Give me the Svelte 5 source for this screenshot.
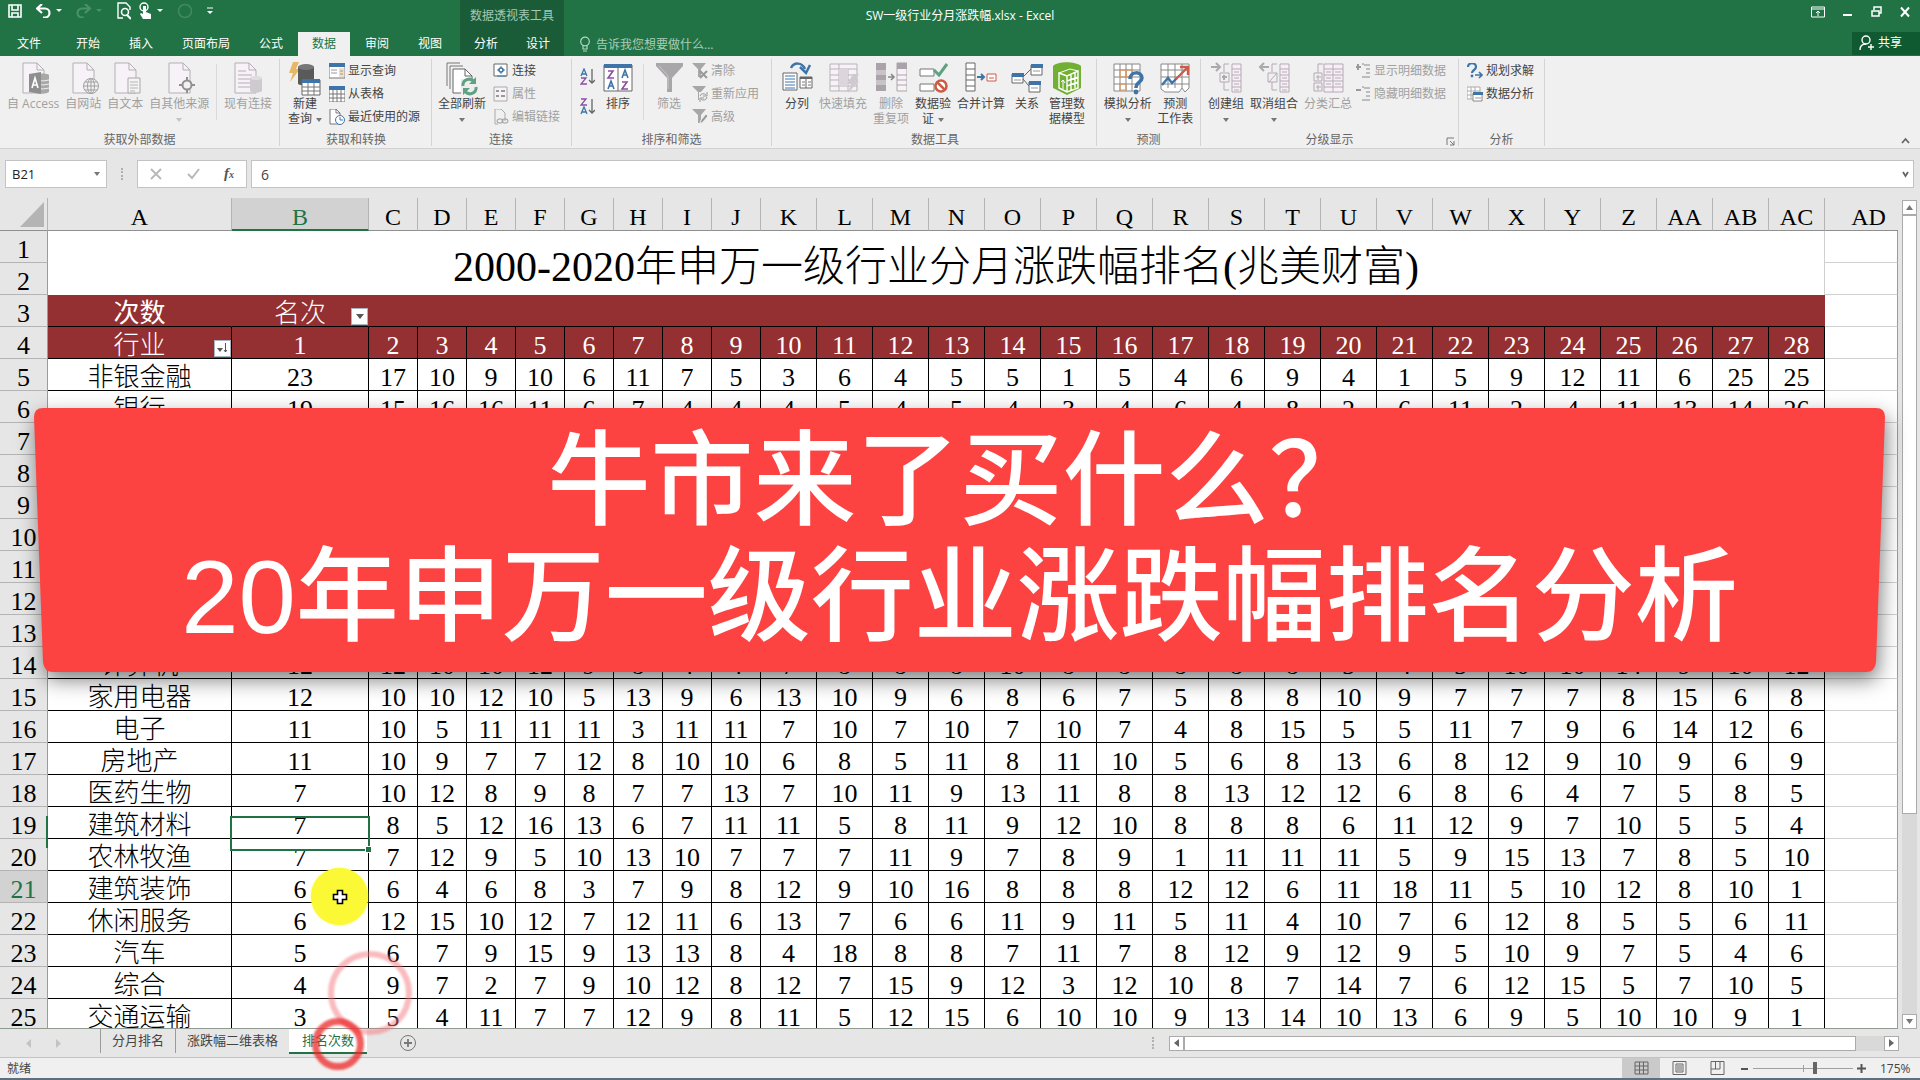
<script lang="ts">
  type Big = { kind: 'big'; icon: string; lines: string[]; off?: boolean; arrow?: boolean }
  type Small = { icon: string; text: string; off?: boolean }
  type Stack = { kind: 'stack'; items: Small[] }
  type Rule = { kind: 'rule' }
  type SortPair = { kind: 'pair' }
  type Group = { id: string; title: string; launcher?: boolean; items: (Big | Stack | Rule | SortPair)[] }

  const tabs = ['开始', '插入', '页面布局', '公式', '数据', '审阅', '视图']

  const groups: Group[] = [
    {
      id: 'external',
      title: '获取外部数据',
      items: [
        { kind: 'big', icon: 'access', lines: ['自 Access'], off: true },
        { kind: 'big', icon: 'web', lines: ['自网站'], off: true },
        { kind: 'big', icon: 'text', lines: ['自文本'], off: true },
        { kind: 'big', icon: 'other', lines: ['自其他来源'], off: true, arrow: true },
        { kind: 'rule' },
        { kind: 'big', icon: 'existing', lines: ['现有连接'], off: true },
      ],
    },
    {
      id: 'transform',
      title: '获取和转换',
      items: [
        { kind: 'big', icon: 'query', lines: ['新建', '查询'], arrow: true },
        {
          kind: 'stack',
          items: [
            { icon: 'showquery', text: '显示查询' },
            { icon: 'fromtable', text: '从表格' },
            { icon: 'recent', text: '最近使用的源' },
          ],
        },
      ],
    },
    {
      id: 'connect',
      title: '连接',
      items: [
        { kind: 'big', icon: 'refresh', lines: ['全部刷新'], arrow: true },
        {
          kind: 'stack',
          items: [
            { icon: 'link', text: '连接' },
            { icon: 'props', text: '属性', off: true },
            { icon: 'editlink', text: '编辑链接', off: true },
          ],
        },
      ],
    },
    {
      id: 'sort',
      title: '排序和筛选',
      items: [
        { kind: 'pair' },
        { kind: 'big', icon: 'sort', lines: ['排序'] },
        { kind: 'rule' },
        { kind: 'big', icon: 'filter', lines: ['筛选'], off: true },
        {
          kind: 'stack',
          items: [
            { icon: 'clear', text: '清除', off: true },
            { icon: 'reapply', text: '重新应用', off: true },
            { icon: 'advanced', text: '高级', off: true },
          ],
        },
      ],
    },
    {
      id: 'tools',
      title: '数据工具',
      items: [
        { kind: 'big', icon: 'columns', lines: ['分列'] },
        { kind: 'big', icon: 'flash', lines: ['快速填充'], off: true },
        { kind: 'big', icon: 'dedupe', lines: ['删除', '重复项'], off: true },
        { kind: 'big', icon: 'validate', lines: ['数据验', '证'], arrow: true },
        { kind: 'big', icon: 'consolidate', lines: ['合并计算'] },
        { kind: 'big', icon: 'relation', lines: ['关系'] },
        { kind: 'big', icon: 'model', lines: ['管理数', '据模型'] },
      ],
    },
    {
      id: 'forecast',
      title: '预测',
      items: [
        { kind: 'big', icon: 'whatif', lines: ['模拟分析'], arrow: true },
        { kind: 'big', icon: 'forecast', lines: ['预测', '工作表'] },
      ],
    },
    {
      id: 'outline',
      title: '分级显示',
      launcher: true,
      items: [
        { kind: 'big', icon: 'group', lines: ['创建组'], arrow: true },
        { kind: 'big', icon: 'ungroup', lines: ['取消组合'], arrow: true },
        { kind: 'big', icon: 'subtotal', lines: ['分类汇总'], off: true },
        {
          kind: 'stack',
          items: [
            { icon: 'expand', text: '显示明细数据', off: true },
            { icon: 'collapse', text: '隐藏明细数据', off: true },
          ],
        },
      ],
    },
    {
      id: 'analysis',
      title: '分析',
      items: [
        {
          kind: 'stack',
          items: [
            { icon: 'solver', text: '规划求解' },
            { icon: 'analysis', text: '数据分析' },
          ],
        },
      ],
    },
  ]

  const columns = 'A B C D E F G H I J K L M N O P Q R S T U V W X Y Z AA AB AC AD'.split(' ')
  const ranks = Array.from({ length: 28 }, (_, i) => i + 1)

  const rows = [
    { n: 5, name: '非银金融', v: '23 17 10 9 10 6 11 7 5 3 6 4 5 5 1 5 4 6 9 4 1 5 9 12 11 6 25 25' },
    { n: 6, name: '银行', v: '19 15 16 16 11 6 7 4 4 4 5 4 5 4 3 4 6 4 8 2 6 11 2 4 11 13 14 26' },
    { n: 7, name: '', v: '' },
    { n: 8, name: '', v: '' },
    { n: 9, name: '', v: '' },
    { n: 10, name: '', v: '' },
    { n: 11, name: '', v: '' },
    { n: 12, name: '', v: '' },
    { n: 13, name: '', v: '' },
    { n: 14, name: '计算机', v: '12 12 10 10 12 9 8 4 4 7 8 8 8 10 8 8 8 8 8 5 4 5 10 10 14 9 10 12' },
    { n: 15, name: '家用电器', v: '12 10 10 12 10 5 13 9 6 13 10 9 6 8 6 7 5 8 8 10 9 7 7 7 8 15 6 8' },
    { n: 16, name: '电子', v: '11 10 5 11 11 11 3 11 11 7 10 7 10 7 10 7 4 8 15 5 5 11 7 9 6 14 12 6' },
    { n: 17, name: '房地产', v: '11 10 9 7 7 12 8 10 10 6 8 5 11 8 11 10 5 6 8 13 6 8 12 9 10 9 6 9' },
    { n: 18, name: '医药生物', v: '7 10 12 8 9 8 7 7 13 7 10 11 9 13 11 8 8 13 12 12 6 8 6 4 7 5 8 5' },
    { n: 19, name: '建筑材料', v: '7 8 5 12 16 13 6 7 11 11 5 8 11 9 12 10 8 8 8 6 11 12 9 7 10 5 5 4' },
    { n: 20, name: '农林牧渔', v: '7 7 12 9 5 10 13 10 7 7 7 11 9 7 8 9 1 11 11 11 5 9 15 13 7 8 5 10' },
    { n: 21, name: '建筑装饰', v: '6 6 4 6 8 3 7 9 8 12 9 10 16 8 8 8 12 12 6 11 18 11 5 10 12 8 10 1' },
    { n: 22, name: '休闲服务', v: '6 12 15 10 12 7 12 11 6 13 7 6 6 11 9 11 5 11 4 10 7 6 12 8 5 5 6 11' },
    { n: 23, name: '汽车', v: '5 6 7 9 15 9 13 13 8 4 18 8 8 7 11 7 8 12 9 12 9 5 10 9 7 5 4 6' },
    { n: 24, name: '综合', v: '4 9 7 2 7 9 10 12 8 12 7 15 9 12 3 12 10 8 7 14 7 6 12 15 5 7 10 5' },
    { n: 25, name: '交通运输', v: '3 5 4 11 7 7 12 9 8 11 5 12 15 6 10 10 9 13 14 10 13 6 9 5 10 10 9 1' },
  ].map((r) => ({ n: r.n, name: r.name, cells: r.v ? r.v.split(' ') : ranks.map(() => '') }))

  const sheets = ['分月排名', '涨跌幅二维表格', '排名次数']

  let cellRef = $state('B21')
  let formula = $state('6')
  let zoom = $state(62)
</script>

{#snippet page()}
  <path d="M6 1h14l7 7v23H6z" fill="#f7f2f7" stroke="#b5afb5" /><path d="M20 1v7h7" fill="none" stroke="#b5afb5" />
{/snippet}

{#snippet glyph(name: string)}
  {#if name === 'access'}
    {@render page()}
    <path d="M18 13c3-2 12-2 14 0v17c-3 2-11 2-14 0z" fill="#a8a8a8" />
    <path d="M20 18q6 2 12 0M20 22q6 2 12 0M20 26q6 2 12 0" stroke="#eee" fill="none" />
    <path d="M12 12l12-2v22l-12-2z" fill="#8e8e8e" />
    <path d="M15 26l3-10 3 10M16 23h4" stroke="#fff" stroke-width="1.6" fill="none" />
  {:else if name === 'web'}
    {@render page()}
    <circle cx="24" cy="24" r="7.5" fill="#f2f2f2" stroke="#a0a0a0" />
    <ellipse cx="24" cy="24" rx="3.5" ry="7.5" fill="none" stroke="#a0a0a0" />
    <path d="M17 24h14M18 20h12M18 28h12M24 16v16" stroke="#a0a0a0" fill="none" />
  {:else if name === 'text'}
    {@render page()}
    <path d="M19 16h12v15H19z" fill="#f4f4f4" stroke="#a8a8a8" />
    <path d="M21 20h8M21 23h8M21 26h8M21 29h5" stroke="#b4b4b4" />
  {:else if name === 'other'}
    {@render page()}
    <circle cx="24" cy="23" r="4.5" fill="#f2f2f2" stroke="#909090" stroke-width="2" />
    <path d="M24 15v4M24 27v4M16 23h4M28 23h4" stroke="#909090" stroke-width="2" />
  {:else if name === 'existing'}
    <path d="M3 1h14l7 7v23H3z" fill="#f7f2f7" stroke="#b5afb5" /><path d="M17 1v7h7" fill="none" stroke="#b5afb5" />
    <path d="M6 9h8M6 13h14M6 17h14M6 21h12M6 25h12" stroke="#b5afb5" />
    <path d="M18 16c2-2 10-2 12 0v13c-2 2-10 2-12 0z" fill="#cfcacf" />
    <ellipse cx="24" cy="16" rx="6" ry="2" fill="#e0dce0" />
  {:else if name === 'query'}
    <path d="M4 0h6L7 7h4L1 20l3-9H0z" fill="#e8b766" />
    <path d="M9 5c3-3 13-3 16 0v17c-4 2-12 2-16 0z" fill="#5a5a5a" />
    <ellipse cx="17" cy="5" rx="8" ry="3" fill="#777" />
    <path d="M13 18h18v15H13z" fill="#fff" stroke="#666" />
    <path d="M13 17h18v4H13z" fill="#3e74a8" />
    <path d="M13 25h18M13 29h18M19 21v12M25 21v12" stroke="#777" />
  {:else if name === 'refresh'}
    <path d="M1 24V1h13M4 27V4h13" fill="none" stroke="#777" />
    <path d="M7 7h12l7 7v17H7z" fill="#fff" stroke="#666" /><path d="M19 7v7h7" fill="none" stroke="#666" />
    <rect x="15" y="17" width="16" height="15" fill="#eee" />
    <path d="M17 24a6 6 0 0 1 11-4M30 25a6 6 0 0 1-11 4" stroke="#5fa183" stroke-width="3" fill="none" />
    <path d="M30 15v7h-7zM17 33v-7h7z" fill="#5fa183" />
  {:else if name === 'sort'}
    <path d="M2 3h28v26H2zM16 3v26" fill="#fff" stroke="#666" />
    <path d="M2 2h28v4H2z" fill="#3e74a8" />
    <path d="M6 9h5l-5 7h6M20 20h5l-5 7h6" stroke="#8a4fa3" stroke-width="1.6" fill="none" />
    <path d="M20 16l3-8 3 8M21 13h4M6 27l3-8 3 8M7 24h4" stroke="#3e74a8" stroke-width="1.6" fill="none" />
  {:else if name === 'filter'}
    <path d="M3 1h27v3L19 16v14h-5V16L3 4z" fill="#a9a6a9" />
    <path d="M6 4l9 10v13" stroke="#c9c6c9" fill="none" />
  {:else if name === 'columns'}
    <path d="M10 6c3-6 11-6 14 1" stroke="#3e74a8" stroke-width="2.5" fill="none" /><path d="M19 5l6 6 4-8" fill="none" stroke="#3e74a8" stroke-width="2.5" />
    <path d="M2 11h14v17H2z" fill="#fff" stroke="#666" />
    <path d="M4 14h10M4 17h10M4 20h10M4 23h10M4 26h10" stroke="#3e74a8" />
    <path d="M19 15h12v11H19zM25 15v11" fill="#fff" stroke="#666" /><path d="M19 16h12" stroke="#666" stroke-width="2" />
    <path d="M21 20h3M21 23h3M27 20h3M27 23h3" stroke="#777" />
  {:else if name === 'flash'}
    <path d="M3 2h27v27H3zM3 7h27M3 13h27M3 18h27M3 24h27M12 2v27M21 7v22" fill="#f6f2f6" stroke="#b9b3b9" />
    <path d="M12 7h9v17h-9z" fill="#dcd6dc" /><path d="M26 12h6l-4 7h4L21 31l3-9h-4z" fill="#cfcacf" />
  {:else if name === 'dedupe'}
    <path d="M1 1h10v28H1z" fill="#aaa4aa" /><path d="M1 8h10v5H1zM1 18h10v5H1z" fill="#c8c3c8" />
    <path d="M22 1h10v28H22z" fill="#f6f2f6" stroke="#aaa4aa" /><path d="M22 1h10v6H22z" fill="#aaa4aa" />
    <path d="M22 13h10M22 18h10M22 23h10" stroke="#aaa4aa" />
    <path d="M13 15h6M16 12l3 3-3 3" stroke="#888" stroke-width="1.6" fill="none" />
  {:else if name === 'validate'}
    <path d="M3 7h14v7H3zM3 22h14v7H3z" fill="#fff" stroke="#777" />
    <path d="M17 8l5 5 8-11" fill="none" stroke="#5fa183" stroke-width="3" />
    <circle cx="24" cy="24" r="5.5" fill="#fff" stroke="#cd5b45" stroke-width="2.5" /><path d="M20 20l8 8" stroke="#cd5b45" stroke-width="2.5" />
  {:else if name === 'consolidate'}
    <path d="M1 1h9v28H1zM1 7h9M1 13h9M1 18h9M1 24h9" fill="#fff" stroke="#666" />
    <path d="M12 15h7M16 12l3 3-3 3" stroke="#3e74a8" stroke-width="2" fill="none" />
    <path d="M22 12h9v7h-9zM24 16h5" fill="#fff" stroke="#cd5b45" />
  {:else if name === 'relation'}
    <path d="M12 15l8-8M12 17l6 7" stroke="#666" />
    <path d="M1 12h11v9H1zM20 3h11v10H20zM18 20h11v10H18z" fill="#fff" stroke="#666" />
    <path d="M1 11h12v4H1zM20 2h12v4H20zM18 19h12v4H18z" fill="#3e74a8" />
    <path d="M3 18h7M22 9h7M20 26h7" stroke="#999" />
  {:else if name === 'model'}
    <path d="M2 4c5-5 22-5 28 0v22l-14 7L2 26z" fill="#72b033" />
    <path d="M8 11l8 3 11-5v17l-11 4-8-4zM16 14v16M20 12v16M24 11v15M16 19l11-4M16 24l11-4" stroke="#fff" fill="none" stroke-width="1.4" />
    <path d="M8 11l11-4 8 2" stroke="#fff" fill="none" /><path d="M12 27v-9l-2 2M12 18l2 3" stroke="#fff" fill="none" />
  {:else if name === 'whatif'}
    <path d="M2 2h26v27H2zM8 2v27M14 2v27M20 2v27M2 8h26M2 15h26M2 22h26" fill="#fff" stroke="#888" />
    <path d="M8 8h6v7H8zM8 22h6v6H8zM14 8h6v7h-6z" fill="none" stroke="#e09250" />
    <path d="M18 17c0-8 12-8 12-1 0 4-6 4-6 10" stroke="#3e74a8" stroke-width="3.5" fill="none" /><circle cx="24" cy="30" r="2.4" fill="#3e74a8" />
  {:else if name === 'forecast'}
    <path d="M2 2h28v24l-4 4-3-4-3 4H6l-4-3zM9 2v24M16 2v24M23 2v24M2 8h28M2 15h28M2 22h28" fill="#fff" stroke="#888" />
    <path d="M3 23l6-7 4 5 5-5" stroke="#3e74a8" stroke-width="2.4" fill="none" /><path d="M17 17l11-11M21 5h8v8" stroke="#cd5b45" stroke-width="2.4" fill="none" />
  {:else if name === 'group' || name === 'ungroup'}
    <path d="M22 2h9v28h-9zM22 7h9M22 13h9M22 19h9M22 25h9" fill="#f6f0f6" stroke="#b5a9b5" />
    <path d="M24 10h5M24 16h5M24 22h5M24 28h5" stroke="#b5a9b5" />
    <path d="M19 2h-5v8M14 20v8h5M10 11h9v9h-9z" fill="none" stroke="#b5a9b5" />
    {#if name === 'group'}
      <path d="M1 5h8M6 1l4 4-4 4M14 13v5M12 15h5" stroke="#aaa" stroke-width="2" fill="none" />
    {:else}
      <path d="M3 5h8M6 1L2 5l4 4" stroke="#aaa" stroke-width="2" fill="none" /><path d="M11 20l8-9" stroke="#b5a9b5" />
    {/if}
  {:else if name === 'subtotal'}
    <path d="M12 2h19v28H12zM12 7h19M12 13h19M12 19h19M12 25h19M21 2v28" fill="#f6f0f6" stroke="#b5a9b5" />
    <path d="M2 11h8v8H2zM2 21h8v8H2zM6 13v5M4 15h5M6 23v5M4 25h5M6 11V2h5" fill="none" stroke="#b5a9b5" />
    <path d="M14 10h5M14 16h5M14 22h5M23 10h6M23 16h6M23 22h6" stroke="#b5a9b5" />
  {:else if name === 'showquery'}
    <path d="M0 1h16v14H0z" fill="#fff" stroke="#777" /><path d="M0 0h16v4H0z" fill="#3e74a8" />
    <path d="M10 5h5v9h-5z" fill="#f2dfc4" /><path d="M2 7h6M2 10h6M11 8h3M11 11h3" stroke="#999" />
  {:else if name === 'fromtable'}
    <path d="M0 1h16v15H0zM4 4v12M8 4v12M12 4v12M0 8h16M0 12h16" fill="#fff" stroke="#777" /><path d="M0 0h16v4H0z" fill="#3e74a8" />
  {:else if name === 'recent'}
    <path d="M1 0h6l4 4v11H1z" fill="#fff" stroke="#777" /><path d="M7 0v4h4" fill="none" stroke="#777" />
    <circle cx="11" cy="11" r="4.5" fill="#fff" stroke="#3e74a8" /><path d="M11 8v3h3" stroke="#3e74a8" fill="none" />
  {:else if name === 'link'}
    <path d="M1 1h13v12H1z" fill="#fff" stroke="#666" /><circle cx="8" cy="7" r="2" fill="none" stroke="#3e74a8" stroke-width="1.6" />
    <path d="M8 3v2M8 9v2M4 7h2M10 7h2M4 13h9" stroke="#3e74a8" />
  {:else if name === 'props'}
    <path d="M1 1h13v14H1z" fill="#f6f2f6" stroke="#aaa" /><path d="M3 5h3M3 10h3M8 5h4M8 10h4" stroke="#999" stroke-width="2" />
  {:else if name === 'editlink'}
    <path d="M2 0h6l4 4v8M2 0v15h3" fill="none" stroke="#aaa" />
    <rect x="4" y="10" width="6" height="4" rx="2" fill="none" stroke="#999" /><rect x="9" y="10" width="6" height="4" rx="2" fill="none" stroke="#999" />
  {:else if name === 'clear' || name === 'reapply' || name === 'advanced'}
    <path d="M0 0h14L9 6v8H6V6z" fill="#a9a6a9" />
    {#if name === 'clear'}
      <path d="M8 8l7 7M15 8l-7 7" stroke="#999" stroke-width="2" />
    {:else if name === 'reapply'}
      <rect x="7" y="6" width="9" height="10" fill="#eee" /><path d="M8 10a3.5 3.5 0 0 1 6-1M15 11a3.5 3.5 0 0 1-6 2M15 6v4h-4M8 16v-4h4" stroke="#999" fill="none" />
    {:else}
      <path d="M8 15l1-4 5-6 2 2-5 6z" fill="#999" stroke="#eee" />
    {/if}
  {:else if name === 'expand' || name === 'collapse'}
    <path d="M9 2h6M11 6h4M11 10h4M9 14h6M7 1h2M7 14h2" stroke="#aaa" stroke-width="1.4" /><path d="M1 4h5" stroke="#999" stroke-width="2" />
    {#if name === 'expand'}<path d="M3 1v6" stroke="#999" stroke-width="2" />{/if}
  {:else if name === 'solver'}
    <path d="M1 4c0-5 8-5 8 0 0 3-4 3-4 6" stroke="#3e74a8" stroke-width="2.2" fill="none" /><circle cx="5" cy="13" r="1.4" fill="#3e74a8" />
    <path d="M8 12h6M12 9l3 3-3 3" stroke="#3e74a8" stroke-width="1.6" fill="none" />
  {:else if name === 'analysis'}
    <path d="M0 1h13v12H0zM4 1v12M8 1v12M0 5h13M0 9h13" fill="#fff" stroke="#aaa" />
    <path d="M6 7h9v8H6z" fill="#fff" stroke="#888" /><path d="M6 6h10v3H6z" fill="#3e74a8" /><path d="M8 12h6" stroke="#999" />
  {/if}
{/snippet}

<div class="excel">
  <header class="titlebar">
    <div class="chrome">
      <div class="menus">
        <div class="quick">
          <button aria-label="保存"><svg width="14" height="14" viewBox="0 0 14 14"><path d="M1 1h12v12H1zM4 1v5h6V1M4 13V9h6v4" fill="none" stroke="#fff" stroke-width="1.6" /></svg></button>
          <button class="undo" aria-label="撤消"><svg width="26" height="14" viewBox="0 0 26 14"><path d="M6 0L1 4.500l5 4.500M2 4.500h7a4 4 0 0 1 0 9H7" fill="none" stroke="#fff" stroke-width="2.200" /><path d="M20 5h6l-3 3z" fill="#fff" /></svg></button>
          <button class="redo" aria-label="恢复"><svg width="26" height="14" viewBox="0 0 26 14"><path d="M9 0l5 4.500L9 9M13 4.500H6a4 4 0 0 0 0 9h2" fill="none" stroke="#4a9068" stroke-width="2.200" /><path d="M20 5h6l-3 3z" fill="#4a9068" /></svg></button>
          <button aria-label="打印预览"><svg width="14" height="18" viewBox="0 0 14 18"><path d="M13 8V5L9 1H1v15h5" fill="none" stroke="#fff" stroke-width="1.400" /><circle cx="8" cy="10" r="3.500" fill="none" stroke="#fff" stroke-width="1.600" /><path d="M10 13l4 4" stroke="#fff" stroke-width="2" /></svg></button>
          <button class="touch" aria-label="触摸模式"><svg width="24" height="18" viewBox="0 0 24 18"><circle cx="5" cy="5" r="4" fill="none" stroke="#fff" stroke-width="1.400" /><path d="M4 4h3v6l5 2v5H4l-3-5 1-1 2 1z" fill="#fff" /><path d="M18 7h6l-3 3z" fill="#fff" /></svg></button>
          <button class="record" aria-label="录制"><svg width="16" height="16" viewBox="0 0 16 16"><circle cx="8" cy="8" r="6.500" fill="none" stroke="#43895f" stroke-width="1.500" /></svg></button>
          <button class="more" aria-label="自定义"><svg width="6" height="8" viewBox="0 0 6 8"><path d="M0 1h6" stroke="#fff" /><path d="M0 4h6L3 7z" fill="#fff" /></svg></button>
        </div>
        <nav class="tabs">
          <button class="file">文件</button>
          {#each tabs as t}
            <button class:active={t === '数据'}>{t}</button>
          {/each}
        </nav>
      </div>
      <div class="context">
        <span class="context-title">数据透视表工具</span>
        <nav class="tabs">
          <button>分析</button>
          <button>设计</button>
        </nav>
      </div>
      <label class="tell">
        <svg width="12" height="16" viewBox="0 0 12 16"><circle cx="6" cy="5.500" r="4.300" fill="none" stroke="#b5d6c3" stroke-width="1.200" /><path d="M4 9v4h4V9M4 15h4" fill="none" stroke="#b5d6c3" stroke-width="1.200" /></svg>
        <input placeholder="告诉我您想要做什么..." aria-label="告诉我您想要做什么" />
      </label>
      <div class="window">
        <div class="controls">
          <button aria-label="功能区显示选项"><svg width="14" height="12" viewBox="0 0 14 12"><path d="M.5 1h13v10H.5zM.5 3h13M7 10V5M5 7l2-2 2 2" fill="none" stroke="#fff" /></svg></button>
          <button aria-label="最小化"><svg width="10" height="12" viewBox="0 0 10 12"><path d="M0 9h9" stroke="#fff" stroke-width="2" /></svg></button>
          <button aria-label="还原"><svg width="11" height="12" viewBox="0 0 11 12"><path d="M1 5h7v5H1zM3 4V1h7v6H8" fill="none" stroke="#fff" stroke-width="1.500" /></svg></button>
          <button aria-label="关闭"><svg width="10" height="12" viewBox="0 0 10 12"><path d="M1 1.500l8 9M9 1.500l-8 9" stroke="#fff" stroke-width="2" /></svg></button>
        </div>
        <button class="share">
          <svg width="15" height="16" viewBox="0 0 15 16"><circle cx="7" cy="5" r="4" fill="none" stroke="#fff" stroke-width="1.400" /><path d="M1 15c0-4 2-6 6-6M9 12h6M12 9v6" fill="none" stroke="#fff" stroke-width="1.400" /></svg>
          共享
        </button>
      </div>
    </div>
    <div class="doc-title">SW一级行业分月涨跌幅.xlsx - Excel</div>
  </header>

  <section class="ribbon">
    {#each groups as g (g.id)}
      <div class="group {g.id}">
        <div class="tools-row">
          {#each g.items as item}
            {#if item.kind === 'big'}
              <button class="big" class:off={item.off} disabled={item.off}>
                <svg width="32" height="34" viewBox="0 0 32 34">{@render glyph(item.icon)}</svg>
                {#each item.lines as line, i}
                  <span>{line}{#if item.arrow && i === 1}<i class="arrow inline"></i>{/if}</span>
                {/each}
                {#if item.arrow && item.lines.length === 1}<span><i class="arrow"></i></span>{/if}
              </button>
            {:else if item.kind === 'stack'}
              <div class="stack">
                {#each item.items as s}
                  <button class="small" class:off={s.off} disabled={s.off}>
                    <svg width="16" height="16" viewBox="0 0 16 16">{@render glyph(s.icon)}</svg>
                    {s.text}
                  </button>
                {/each}
              </div>
            {:else if item.kind === 'pair'}
              <div class="pair">
                <button aria-label="升序"><svg width="15" height="18" viewBox="0 0 15 18"><path d="M1 8l3-7 3 7M2 6h4" stroke="#3e74a8" fill="none" stroke-width="1.300" /><path d="M1 10h5l-5 6h6" stroke="#8a4fa3" fill="none" stroke-width="1.300" /><path d="M12 1v14M9 12l3 3 3-3" stroke="#666" fill="none" stroke-width="1.300" /></svg></button>
                <button aria-label="降序"><svg width="15" height="18" viewBox="0 0 15 18"><path d="M1 1h5L1 7h6" stroke="#8a4fa3" fill="none" stroke-width="1.300" /><path d="M1 16l3-7 3 7M2 14h4" stroke="#3e74a8" fill="none" stroke-width="1.300" /><path d="M12 1v14M9 12l3 3 3-3" stroke="#666" fill="none" stroke-width="1.300" /></svg></button>
              </div>
            {:else}
              <div class="rule"></div>
            {/if}
          {/each}
        </div>
        <div class="group-title">{g.title}</div>
        {#if g.launcher}
          <button class="launcher" aria-label="分级显示设置"><svg width="9" height="9" viewBox="0 0 9 9"><path d="M1 8V1h7M4 4l4 4M8 4v4H4" fill="none" stroke="#777" /></svg></button>
        {/if}
      </div>
    {/each}
    <button class="fold" aria-label="折叠功能区"><svg width="9" height="7" viewBox="0 0 9 7"><path d="M1 6l3.500-4L8 6" fill="none" stroke="#666" stroke-width="1.800" /></svg></button>
  </section>

  <section class="formula-bar">
    <div class="name-box">
      <input bind:value={cellRef} aria-label="名称框" />
      <i class="arrow"></i>
    </div>
    <span class="dots"></span>
    <div class="fx-box">
      <button aria-label="取消"><svg width="12" height="12" viewBox="0 0 12 12"><path d="M1 1l10 10M11 1L1 11" stroke="#b8b8b8" stroke-width="1.800" /></svg></button>
      <button aria-label="输入"><svg width="13" height="12" viewBox="0 0 13 12"><path d="M1 6l4 4 7-9" fill="none" stroke="#b8b8b8" stroke-width="2" /></svg></button>
      <button class="fx" aria-label="插入函数">f<sub>x</sub></button>
    </div>
    <div class="formula">
      <input bind:value={formula} aria-label="编辑栏" />
      <svg width="7" height="7" viewBox="0 0 7 7"><path d="M1 1l2.500 4L6 1" fill="none" stroke="#666" stroke-width="1.800" /></svg>
    </div>
  </section>

  <main class="workspace">
    <div class="grid">
      <table>
        <colgroup>
          <col class="c-head" />
          <col class="c-a" />
          <col class="c-b" />
          {#each columns.slice(2, 10) as c (c)}<col class="c-narrow" />{/each}
          {#each columns.slice(10, 29) as c (c)}<col class="c-wide" />{/each}
          <col />
        </colgroup>
        <thead>
          <tr>
            <th class="corner"><svg width="24" height="25" viewBox="0 0 24 25"><path d="M24 0v25H0z" fill="#b4b4b4" /></svg></th>
            {#each columns as c (c)}
              <th class:current={c === 'B'} class:last={c === 'AD'}>{c}</th>
            {/each}
          </tr>
        </thead>
        <tbody>
          <tr>
            <th>1</th>
            <td class="title" colspan="29" rowspan="2">2000-2020年申万一级行业分月涨跌幅排名(兆美财富)</td>
            <td class="blank"></td>
          </tr>
          <tr><th>2</th><td class="blank"></td></tr>
          <tr class="red band">
            <th>3</th>
            <td><b>次数</b></td>
            <td class="has-filter">名次<button class="filter" aria-label="筛选名次"><svg width="8" height="5" viewBox="0 0 8 5"><path d="M0 0h8L4 5z" fill="#555" /></svg></button></td>
            <td colspan="27"></td>
            <td class="blank"></td>
          </tr>
          <tr class="red">
            <th>4</th>
            <td class="has-filter">行业<button class="filter" aria-label="筛选行业"><svg width="11" height="11" viewBox="0 0 11 11"><path d="M0 5h6L3 9z" fill="#555" /><path d="M8.500 0v9M7 7l1.500 2L10 7" stroke="#555" fill="none" /></svg></button></td>
            {#each ranks as r (r)}<td>{r}</td>{/each}
            <td class="blank"></td>
          </tr>
          {#each rows as row (row.n)}
            <tr>
              <th class:current={row.n === 21}>{row.n}</th>
              <td>{row.name}</td>
              {#each row.cells as v}<td>{v}</td>{/each}
              <td class="blank"></td>
            </tr>
          {/each}
        </tbody>
      </table>
      <div class="row-mark"></div>
      <div class="selection"><span></span></div>
      <div class="halo">
        <svg width="16" height="16" viewBox="0 0 16 16"><path d="M5.500 1.500h5v4h4v5h-4v4h-5v-4h-4v-5h4z" fill="#fff" stroke="#000" stroke-width="1.600" /></svg>
      </div>
    </div>
    <div class="vscroll">
      <button aria-label="向上滚动"><svg width="7" height="5" viewBox="0 0 7 5"><path d="M3.500 0L7 5H0z" fill="#777" /></svg></button>
      <div class="vtrack"><div class="vthumb"></div></div>
      <button aria-label="向下滚动"><svg width="7" height="5" viewBox="0 0 7 5"><path d="M0 0h7L3.500 5z" fill="#777" /></svg></button>
    </div>

    <div class="banner">
      <svg class="plate" viewBox="0 0 1851 264" preserveAspectRatio="none">
        <path d="M9 0H1842Q1851 0 1851 9L1842 254Q1841 264 1832 264H19Q10 264 9 254L0 9Q0 0 9 0Z" fill="#fd4242" />
      </svg>
      <p>牛市来了买什么？</p>
      <p>20年申万一级行业涨跌幅排名分析</p>
    </div>
    <div class="ripple wide"></div>
    <div class="ripple tight"></div>
  </main>

  <section class="sheetbar">
    <div class="sheet-nav">
      <svg width="6" height="9" viewBox="0 0 6 9"><path d="M5 0v9L0 4.500z" fill="#c3c3c3" /></svg>
      <svg width="6" height="9" viewBox="0 0 6 9"><path d="M1 0v9l5-4.500z" fill="#c3c3c3" /></svg>
    </div>
    {#each sheets as s (s)}
      <button class="sheet" class:open={s === '排名次数'}>{s}</button>
    {/each}
    <button class="add" aria-label="新工作表"><svg width="18" height="18" viewBox="0 0 18 18"><circle cx="9" cy="9" r="7.500" fill="none" stroke="#777" /><path d="M9 5v8M5 9h8" stroke="#777" stroke-width="1.800" /></svg></button>
    <span class="dots"></span>
    <div class="hscroll">
      <button aria-label="向左滚动"><svg width="5" height="8" viewBox="0 0 5 8"><path d="M5 0v8L0 4z" fill="#666" /></svg></button>
      <div class="htrack"><div class="hthumb"></div></div>
      <button aria-label="向右滚动"><svg width="5" height="8" viewBox="0 0 5 8"><path d="M0 0v8l5-4z" fill="#666" /></svg></button>
    </div>
  </section>

  <footer class="status">
    <span class="ready">就绪</span>
    <button class="view on" aria-label="普通"><svg width="15" height="14" viewBox="0 0 15 14"><path d="M1 1h13v12H1zM5.500 1v12M9.500 1v12M1 5h13M1 9h13" fill="none" stroke="#666" /></svg></button>
    <button class="view" aria-label="页面布局"><svg width="15" height="14" viewBox="0 0 15 14"><path d="M1 .5h13v13H1zM4 3h7v8H4zM5 5h5M5 7h5M5 9h5" fill="none" stroke="#666" /></svg></button>
    <button class="view" aria-label="分页预览"><svg width="15" height="14" viewBox="0 0 15 14"><path d="M1 .5h13v13H1zM1 8h9V.5M5.500.5V8" fill="none" stroke="#666" /></svg></button>
    <button class="step" aria-label="缩小"><svg width="9" height="9" viewBox="0 0 9 9"><path d="M1 5h7" stroke="#555" stroke-width="2" /></svg></button>
    <input type="range" min="0" max="100" bind:value={zoom} aria-label="缩放" />
    <button class="step" aria-label="放大"><svg width="9" height="9" viewBox="0 0 9 9"><path d="M0 4.500h9M4.500 0v9" stroke="#555" stroke-width="2" /></svg></button>
    <span class="percent">175%</span>
  </footer>
</div>

<style>
  :global(body) {
    margin: 0;
    overflow: hidden;
  }
  .excel {
    display: flex;
    flex-direction: column;
    height: 100vh;
    background: #e6e6e6;
    font: 12px/15px 'Open Sans', 'Noto Sans CJK SC', sans-serif;
    color: #444;
  }
  button {
    padding: 0;
    border: 0;
    background: none;
    font: inherit;
    color: inherit;
    white-space: nowrap;
  }
  svg {
    display: block;
    flex: none;
  }
  input {
    border: 0;
    padding: 0;
    min-width: 0;
    background: none;
    font: inherit;
    color: inherit;
    outline: 0;
  }

  /* title bar */
  .titlebar {
    display: grid;
    height: 56px;
    background: #217346;
    color: #fff;
  }
  .chrome,
  .doc-title {
    grid-area: 1 / 1;
  }
  .chrome {
    display: flex;
  }
  .doc-title {
    justify-self: center;
    padding-top: 8px;
    pointer-events: none;
  }
  .menus {
    display: flex;
    flex-direction: column;
    width: 460px;
  }
  .quick {
    display: flex;
    align-items: center;
    height: 22px;
    padding-left: 8px;
  }
  .undo,
  .redo {
    margin-left: 14px;
  }
  .redo {
    margin-right: 15px;
  }
  .touch {
    margin-left: 8px;
  }
  .record {
    margin-left: 14px;
  }
  .more {
    margin-left: 14px;
  }
  .tabs {
    display: flex;
    gap: 1px;
    height: 24px;
    margin-top: auto;
  }
  .tabs button {
    padding: 0 14px 2px;
  }
  .tabs .file {
    margin-right: 3px;
    padding: 0 17px 2px;
  }
  .tabs .active {
    background: #f0f0f0;
    color: #217346;
  }
  .context {
    display: flex;
    flex-direction: column;
    align-items: center;
    width: 104px;
    background: #1b5c38;
  }
  .context .tabs {
    gap: 0;
  }
  .context-title {
    padding-top: 8px;
    color: #a3c8b3;
  }
  .tell {
    display: flex;
    align-items: center;
    gap: 5px;
    align-self: flex-end;
    height: 24px;
    padding-left: 15px;
  }
  .tell input::placeholder {
    color: #a9cdb9;
    opacity: 1;
  }
  .window {
    display: flex;
    flex-direction: column;
    align-items: flex-end;
    margin-left: auto;
  }
  .controls {
    display: flex;
    gap: 18px;
    padding: 6px 10px 14px 0;
  }
  .share {
    display: flex;
    align-items: center;
    gap: 4px;
    height: 23px;
    padding: 0 18px 2px 7px;
    background: #0f5a31;
  }

  /* ribbon */
  .ribbon {
    display: flex;
    height: 93px;
    background: #f0f0f0;
    border-bottom: 1px solid #d2d2d2;
    box-sizing: border-box;
  }
  .group {
    position: relative;
    display: flex;
    flex-direction: column;
    box-sizing: border-box;
    margin: 3px 0 2px;
    padding: 0 4px;
    border-right: 1px solid #d4d4d4;
  }
  .external {
    width: 280px;
  }
  .transform {
    width: 152px;
    padding-left: 5px;
  }
  .connect {
    width: 140px;
    padding-left: 3px;
  }
  .sort {
    width: 200px;
  }
  .tools {
    width: 325px;
    padding-left: 6px;
  }
  .forecast {
    width: 104px;
  }
  .outline {
    width: 258px;
  }
  .analysis {
    width: 86px;
  }
  .tools-row {
    display: flex;
    flex: 1;
  }
  .group-title {
    height: 14px;
    text-align: center;
    color: #666;
  }
  .big {
    display: flex;
    flex-direction: column;
    align-items: center;
    min-width: 38px;
    padding: 3px 3px 0;
  }
  .big span {
    height: 15px;
  }
  .off {
    color: #a0a0a0;
  }
  .arrow {
    display: inline-block;
    border: 3px solid transparent;
    border-top: 4px solid #777;
    border-bottom: 0;
    vertical-align: middle;
  }
  .off .arrow {
    border-top-color: #c4c4c4;
  }
  .arrow.inline {
    margin-left: 4px;
  }
  .stack {
    display: flex;
    flex-direction: column;
    padding-left: 4px;
  }
  .outline .stack {
    padding-left: 0;
  }
  .small {
    display: flex;
    align-items: center;
    gap: 3px;
    height: 23px;
  }
  .pair {
    display: flex;
    flex-direction: column;
    gap: 12px;
    padding: 9px 4px 0 4px;
  }
  .rule {
    width: 1px;
    height: 56px;
    margin: 5px 4px 0;
    background: #d9d9d9;
  }
  .sort .rule {
    margin: 5px 6px 0;
  }
  .launcher {
    position: absolute;
    right: 3px;
    bottom: 0;
  }
  .fold {
    align-self: flex-end;
    margin: 0 10px 4px auto;
  }

  /* formula bar */
  .formula-bar {
    display: flex;
    align-items: center;
    height: 28px;
    padding: 11px 6px 0 5px;
    font-size: 14px;
  }
  .name-box,
  .fx-box,
  .formula {
    display: flex;
    align-items: center;
    box-sizing: border-box;
    height: 28px;
    border: 1px solid #c3c3c3;
    background: #fff;
  }
  .name-box {
    width: 102px;
    padding: 0 6px;
  }
  .name-box input {
    flex: 1;
    color: #222;
    font-size: 13px;
  }
  .dots {
    height: 12px;
    border-left: 2px dotted #b0b0b0;
  }
  .name-box + .dots {
    margin: 0 14px;
  }
  .fx-box {
    width: 110px;
    justify-content: space-between;
    padding: 0 12px;
  }
  .fx {
    font: italic bold 15px/20px 'Liberation Serif', serif;
    color: #555;
  }
  .fx sub {
    font-size: 10px;
    vertical-align: baseline;
  }
  .formula {
    flex: 1;
    margin-left: 4px;
    padding: 0 4px 0 9px;
  }
  .formula input {
    flex: 1;
  }

  /* cells */
  .workspace {
    position: relative;
    display: flex;
    flex: 1;
    min-height: 0;
    padding-top: 10px;
  }
  .grid {
    position: relative;
    flex: 1;
    overflow: hidden;
    border-bottom: 1px solid #8f9a90;
  }
  table {
    width: 100%;
    table-layout: fixed;
    border-collapse: separate;
    border-spacing: 0;
    font: 300 26px/24px 'Liberation Serif', 'Noto Sans CJK SC', serif;
    color: #000;
  }
  .c-head {
    width: 48px;
  }
  .c-a {
    width: 184px;
  }
  .c-b {
    width: 137px;
  }
  .c-narrow {
    width: 49px;
  }
  .c-wide {
    width: 56px;
  }
  th,
  td {
    box-sizing: border-box;
    height: 32px;
    padding: 7px 0 0;
    text-align: center;
    white-space: nowrap;
  }
  th {
    background: #e6e6e6;
    border-right: 1px solid #9b9b9b;
    border-bottom: 1px solid #b4b4b4;
    font-weight: 300;
  }
  thead th {
    height: 33px;
    padding-top: 6px;
    border-right-color: #b4b4b4;
    border-bottom-color: #8f8f8f;
    font-size: 24px;
  }
  thead .last {
    padding-left: 14px;
    border-right: 0;
  }
  thead .corner {
    padding: 0 0 0 20px;
  }
  .current {
    background: #d2d2d2;
    color: #217346;
  }
  thead .current {
    border-bottom: 2px solid #217346;
  }
  td {
    background: #fff;
    border-right: 1px solid #000;
    border-bottom: 1px solid #000;
  }
  .title {
    border-right-color: #d0d0d0;
    border-bottom: 0;
    font-size: 42px;
    line-height: 56px;
  }
  .blank,
  .red .blank {
    background: #fff;
    border-right-color: #9b9b9b;
    border-bottom-color: #d0d0d0;
  }
  .red td {
    background: #943031;
    color: #fff;
  }
  .red .blank {
    background: #fff;
  }
  .band td {
    border-right-color: transparent;
  }
  .has-filter {
    position: relative;
  }
  .filter {
    position: absolute;
    right: 0;
    bottom: 1px;
    display: flex;
    align-items: center;
    justify-content: center;
    width: 17px;
    height: 17px;
    border: 1px solid #aab4c0;
    background: #fdfdfd;
  }

  /* overlays on the sheet */
  .row-mark {
    position: absolute;
    left: 46px;
    top: 618px;
    width: 2px;
    height: 32px;
    background: #217346;
  }
  .selection {
    position: absolute;
    left: 230px;
    top: 618px;
    width: 136px;
    height: 31px;
    border: 2px solid #217346;
  }
  .selection span {
    position: absolute;
    right: -4px;
    bottom: -4px;
    width: 5px;
    height: 5px;
    border: 1px solid #fff;
    background: #217346;
  }
  .halo {
    position: absolute;
    left: 311px;
    top: 670px;
    display: flex;
    align-items: center;
    justify-content: center;
    width: 57px;
    height: 57px;
    border-radius: 50%;
    background: #fbf935;
    box-shadow: 0 0 2px #fbf935;
  }
  .ripple {
    position: absolute;
    box-sizing: border-box;
    border-radius: 50%;
  }
  .ripple.wide {
    left: 328px;
    top: 763px;
    width: 84px;
    height: 84px;
    border: 6px solid rgba(244, 120, 125, 0.5);
    filter: blur(1px);
  }
  .ripple.tight {
    left: 312px;
    top: 830px;
    width: 52px;
    height: 52px;
    border: 7px solid rgba(236, 40, 40, 0.75);
    filter: blur(1px);
    z-index: 2;
  }
  .banner {
    position: absolute;
    left: 34px;
    right: 35px;
    top: 220px;
    padding: 16px 0;
    text-align: center;
    color: #fff;
    font: 500 103px/116px 'Liberation Sans', 'Noto Sans CJK SC', sans-serif;
    white-space: nowrap;
  }
  .banner p {
    position: relative;
    margin: 0;
  }
  .plate {
    position: absolute;
    inset: 0;
    width: 100%;
    height: 100%;
    overflow: visible;
    filter: drop-shadow(2px 8px 10px rgba(0, 0, 0, 0.5));
  }

  /* scroll bars */
  .vscroll {
    display: flex;
    flex-direction: column;
    width: 15px;
    margin: 2px 3px 0 4px;
  }
  .vscroll button,
  .hscroll button {
    display: flex;
    align-items: center;
    justify-content: center;
    box-sizing: border-box;
    width: 15px;
    height: 15px;
    border: 1px solid #ababab;
    background: #fff;
  }
  .vtrack {
    flex: 1;
    background: #d9d9d9;
  }
  .vthumb {
    height: 75%;
    box-sizing: border-box;
    border: 1px solid #ababab;
    background: #fff;
  }
  .sheetbar {
    display: flex;
    align-items: center;
    height: 28px;
    border-bottom: 1px solid #c3c3c3;
    font-size: 13px;
  }
  .sheet-nav {
    display: flex;
    gap: 23px;
    width: 74px;
    padding-left: 26px;
  }
  .sheet {
    align-self: flex-start;
    height: 24px;
    padding: 0 11px 2px;
    border-left: 1px solid #9b9b9b;
  }
  .sheet.open {
    height: 25px;
    padding: 0 13px;
    border-left: 0;
    border-bottom: 2px solid #217346;
    background: #fff;
    color: #217346;
  }
  .add {
    margin-left: 32px;
  }
  .add + .dots {
    margin-left: auto;
  }
  .hscroll {
    display: flex;
    width: 730px;
    margin: 0 21px 0 15px;
  }
  .htrack {
    flex: 1;
    background: #d9d9d9;
  }
  .hthumb {
    width: 96%;
    height: 15px;
    box-sizing: border-box;
    border: 1px solid #ababab;
    background: #fff;
  }

  /* status bar */
  .status {
    display: flex;
    align-items: center;
    height: 20px;
    padding-right: 7px;
    background: #f0f0f0;
    border-bottom: 2px solid #5d6f80;
  }
  .ready {
    margin-right: auto;
    padding-left: 7px;
  }
  .view {
    display: flex;
    align-items: center;
    justify-content: center;
    width: 38px;
    height: 20px;
  }
  .view.on {
    background: #cacaca;
  }
  .step {
    margin: 0 4px;
  }
  input[type='range'] {
    appearance: none;
    width: 100px;
    height: 16px;
    margin: 0;
    background: linear-gradient(#a0a0a0, #a0a0a0) center / 100% 1px no-repeat, linear-gradient(#a0a0a0, #a0a0a0) center / 1px 7px no-repeat;
  }
  input[type='range']::-webkit-slider-thumb {
    appearance: none;
    width: 4px;
    height: 12px;
    background: #666;
  }
  .percent {
    width: 33px;
    margin-left: 10px;
  }
</style>
